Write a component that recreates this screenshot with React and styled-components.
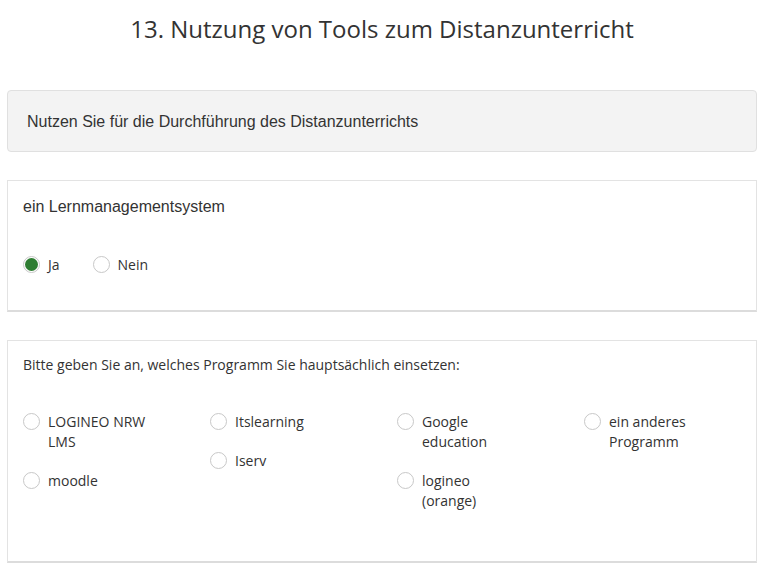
import React from 'react';
import styled, { createGlobalStyle } from 'styled-components';

const GlobalStyle = createGlobalStyle`
  html, body {
    margin: 0;
    padding: 0;
    background: #fff;
  }
  body {
    font-family: "Open Sans", sans-serif;
    color: #333;
  }
`;

const Page = styled.div`
  padding: 0 7px;
  width: 764px;
  box-sizing: border-box;
`;

const Title = styled.h1`
  margin: 0;
  padding-top: 13px;
  height: 90px;
  box-sizing: border-box;
  text-align: center;
  font-family: "Open Sans", sans-serif;
  font-weight: 400;
  font-size: 24px;
  line-height: 32px;
  color: #333;
`;

const Intro = styled.div`
  height: 62px;
  box-sizing: border-box;
  display: flex;
  align-items: center;
  padding: 1px 19px 0;
  background: #f3f3f3;
  border: 1px solid #e0e0e0;
  border-radius: 4px;
  font-family: "Liberation Sans", Arial, sans-serif;
  font-size: 16px;
  color: #333;
  margin-bottom: 28px;
`;

const Card = styled.section`
  box-sizing: border-box;
  height: ${p => p.$h}px;
  border: 1px solid #e3e3e3;
  border-bottom: 2px solid #dcdcdc;
  padding: ${p => p.$pt}px 15px 0;
  margin-bottom: 28px;
  background: #fff;
`;

const Question = styled.div`
  font-family: ${p => (p.$arial ? '"Liberation Sans", Arial, sans-serif' : '"Open Sans", sans-serif')};
  font-size: ${p => (p.$arial ? 16 : 14)}px;
  line-height: 20px;
  color: #333;
`;

const InlineOptions = styled.div`
  display: flex;
  gap: 33px;
  margin-top: 38px;
`;

const Grid = styled.div`
  display: grid;
  grid-template-columns: repeat(4, 187px);
  margin-top: 37px;
`;

const Column = styled.div`
  display: flex;
  flex-direction: column;
  gap: 19px;
`;

const Option = styled.label`
  display: flex;
  align-items: flex-start;
  gap: 8px;
  font-family: "Open Sans", sans-serif;
  font-size: 14px;
  line-height: 20px;
  color: #333;
`;

const Label = styled.span`
  max-width: 102px;
`;

const Radio = styled.span`
  flex: none;
  width: 17px;
  height: 17px;
  box-sizing: border-box;
  margin-top: 1px;
  border-radius: 50%;
  border: 1px solid #c8c8c8;
  background: #fff;
  display: flex;
  align-items: center;
  justify-content: center;
  &::after {
    content: "";
    width: 13px;
    height: 13px;
    border-radius: 50%;
    background: ${p => (p.$checked ? '#2e7d32' : 'transparent')};
  }
`;

const RadioOption = ({ label, checked }) => (
  <Option>
    <Radio $checked={checked} />
    <Label>{label}</Label>
  </Option>
);

const columns = [
  ['LOGINEO NRW LMS', 'moodle'],
  ['Itslearning', 'Iserv'],
  ['Google education', 'logineo (orange)'],
  ['ein anderes Programm'],
];

export default function App() {
  return (
    <Page>
      <GlobalStyle />
      <Title>13. Nutzung von Tools zum Distanzunterricht</Title>
      <Intro>Nutzen Sie für die Durchführung des Distanzunterrichts</Intro>
      <Card $h={132} $pt={16}>
        <Question $arial>ein Lernmanagementsystem</Question>
        <InlineOptions>
          <RadioOption label="Ja" checked />
          <RadioOption label="Nein" />
        </InlineOptions>
      </Card>
      <Card $h={223} $pt={14}>
        <Question>Bitte geben Sie an, welches Programm Sie hauptsächlich einsetzen:</Question>
        <Grid>
          {columns.map((col, i) => (
            <Column key={i}>
              {col.map(label => (
                <RadioOption key={label} label={label} />
              ))}
            </Column>
          ))}
        </Grid>
      </Card>
    </Page>
  );
}
